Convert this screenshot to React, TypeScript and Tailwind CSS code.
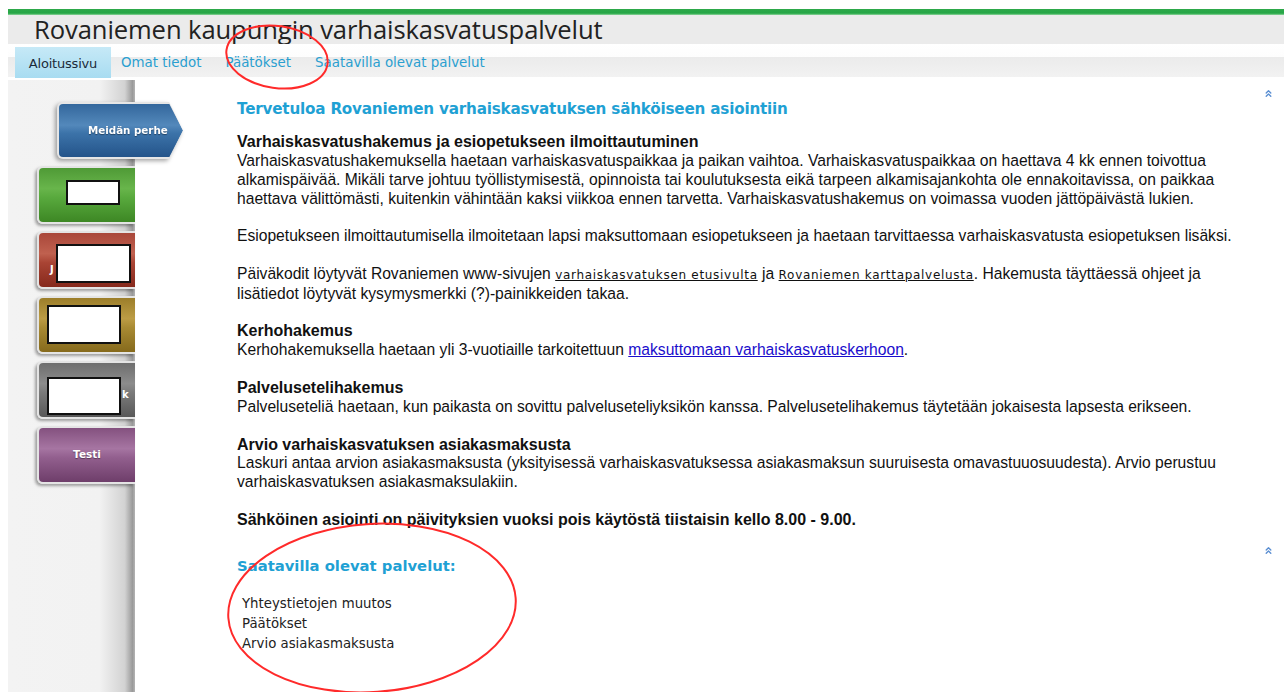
import { ChevronsUp } from "lucide-react";

const navItems = ["Aloitussivu", "Omat tiedot", "Päätökset", "Saatavilla olevat palvelut"];

// glossy fills for the family menu buttons
const glossGreen =
  "bg-[linear-gradient(to_bottom,#4f9a36_0%,#68b54b_38%,#58a93d_55%,#3d8724_100%)]";
const glossRed =
  "bg-[linear-gradient(to_bottom,#a9473a_0%,#c0614f_38%,#a94434_55%,#86291c_100%)]";
const glossGold =
  "bg-[linear-gradient(to_bottom,#9c7e2a_0%,#bc9c45_38%,#a88a33_55%,#866a1c_100%)]";
const glossGray =
  "bg-[linear-gradient(to_bottom,#6e6e6e_0%,#8c8c8c_38%,#7a7a7a_55%,#585858_100%)]";
const glossPurple =
  "bg-[linear-gradient(to_bottom,#84517f_0%,#a675a2_38%,#925f8e_55%,#6e3e6a_100%)]";

function SideButton({ gloss, children, className = "" }: { gloss: string; children?: React.ReactNode; className?: string }) {
  return (
    <div className="rounded-l-[6px] border-2 border-r-0 border-[#e4e4e4] shadow-[-2px_2px_3px_rgba(0,0,0,0.35)] ml-[29px] h-[58px]">
      <div className={`h-full rounded-l-[4px] ${gloss} ${className}`}>{children}</div>
    </div>
  );
}

function Hidden({ className }: { className: string }) {
  return <div className={`bg-white border-2 border-[#111] shrink-0 ${className}`} />;
}

export default function App() {
  return (
    <div className="relative w-[1284px] h-[692px] overflow-hidden bg-white pl-2 pt-[9px] flex flex-col">
      {/* top stripe */}
      <div className="h-[6px] bg-[linear-gradient(to_bottom,#2ea84a_0%,#25a646_70%,#8fd49c_100%)]" />

      {/* title bar */}
      <div className="h-[29px] bg-[#ebebeb] pl-[26px] flex items-center">
        <h1 className="font-['Open_Sans',sans-serif] text-[25.6px] leading-none text-[#222] tracking-[-0.1px]">
          Rovaniemen kaupungin varhaiskasvatuspalvelut
        </h1>
      </div>

      {/* navigation */}
      <div className="h-[33px] bg-[linear-gradient(to_bottom,#ffffff_0px,#fdfdfd_13px,#ebebeb_13px,#f2f2f2_33px)] flex items-end pl-[7px] font-['DejaVu_Sans',Verdana,sans-serif] text-[13.4px]">
        {navItems.map((item, i) =>
          i === 0 ? (
            <div
              key={item}
              className="h-[31px] w-[96px] mb-[-1px] pt-[3px] flex items-center justify-center bg-[linear-gradient(to_bottom,#c6e9f7_0%,#a8dcf1_100%)] text-[#1b2b3a] text-[13px] tracking-[-0.2px]"
            >
              {item}
            </div>
          ) : (
            <div key={item} className="h-[31px] pt-[4px] flex items-center ml-[10px] mr-[14px] text-[#2a9fd0]">
              {item}
            </div>
          )
        )}
      </div>

      <div className="h-[3px]" />

      {/* page body */}
      <div className="flex flex-1 min-h-0">
        {/* family menu */}
        <div className="w-[127px] shrink-0 bg-[linear-gradient(to_right,#f3f3f3_0%,#f2f2f2_72%,#d2d2d2_92%,#9a9a9a_98%,#b4b4b4_100%)] flex flex-col pt-[22px] gap-[7px]">
          <div className="ml-[49px] w-[126px] h-[57px] relative z-10 drop-shadow-[-2px_2px_2px_rgba(0,0,0,0.35)]">
            <div className="h-full bg-[#e6e6e6] rounded-l-[6px] [clip-path:polygon(0_0,89%_0,100%_50%,89%_100%,0_100%)] p-[2px] pr-0">
              <div className="h-full rounded-l-[4px] bg-[linear-gradient(to_bottom,#33679c_0%,#5388bb_40%,#3c73a9_55%,#24548a_100%)] [clip-path:polygon(0_0,89%_0,100%_50%,89%_100%,0_100%)] flex items-center pl-[29px] font-['DejaVu_Sans',Verdana,sans-serif] font-bold text-[10.3px] text-white [text-shadow:0_1px_1px_rgba(0,0,0,0.4)]">
                Meidän perhe
              </div>
            </div>
          </div>

          <SideButton gloss={glossGreen} className="flex items-start pl-[27px] pt-[12px]">
            <Hidden className="w-[54px] h-[25px]" />
          </SideButton>

          <SideButton gloss={glossRed} className="flex items-start pl-[11px] pt-[11px] gap-[2px] font-['DejaVu_Sans',Verdana,sans-serif] font-bold text-[10px] text-white">
            <span className="mt-[18px]">J</span>
            <Hidden className="w-[75px] h-[39px]" />
          </SideButton>

          <SideButton gloss={glossGold} className="flex items-start pl-[8px] pt-[7px]">
            <Hidden className="w-[74px] h-[39px]" />
          </SideButton>

          <SideButton gloss={glossGray} className="flex items-start pl-[8px] pt-[14px] gap-[1px] font-['DejaVu_Sans',Verdana,sans-serif] font-bold text-[10px] text-white">
            <Hidden className="w-[74px] h-[38px]" />
            <span className="mt-[10px]">k</span>
          </SideButton>

          <SideButton
            gloss={glossPurple}
            className="flex items-center justify-center font-['DejaVu_Sans',Verdana,sans-serif] font-bold text-[10.5px] text-white [text-shadow:0_1px_1px_rgba(0,0,0,0.4)]"
          >
            Testi
          </SideButton>
        </div>

        {/* main content */}
        <div className="flex-1 pl-[102px] pr-[10px] pt-[8px] font-['Liberation_Sans',Arial,sans-serif] text-[15.65px] leading-[18.85px] text-[#111]">
          <div className="flex justify-between items-start">
            <h2 className="mt-[12px] font-['DejaVu_Sans',Verdana,sans-serif] font-bold text-[15.2px] leading-[19px] text-[#1fa1d4] tracking-[-0.2px]">
              Tervetuloa Rovaniemen varhaiskasvatuksen sähköiseen asiointiin
            </h2>
            <ChevronsUp size={11} strokeWidth={3} className="text-[#5b8fd2] mt-[0px]" />
          </div>

          <div className="mt-[14px] whitespace-nowrap">
            <p className="font-bold text-[16px]">Varhaiskasvatushakemus ja esiopetukseen ilmoittautuminen</p>
            <p>
              Varhaiskasvatushakemuksella haetaan varhaiskasvatuspaikkaa ja paikan vaihtoa. Varhaiskasvatuspaikkaa on haettava 4 kk ennen toivottua
              <br />
              alkamispäivää. Mikäli tarve johtuu työllistymisestä, opinnoista tai koulutuksesta eikä tarpeen alkamisajankohta ole ennakoitavissa, on paikkaa
              <br />
              haettava välittömästi, kuitenkin vähintään kaksi viikkoa ennen tarvetta. Varhaiskasvatushakemus on voimassa vuoden jättöpäivästä lukien.
            </p>
            <p className="mt-[18.85px]">
              Esiopetukseen ilmoittautumisella ilmoitetaan lapsi maksuttomaan esiopetukseen ja haetaan tarvittaessa varhaiskasvatusta esiopetuksen lisäksi.
            </p>
            <p className="mt-[18.85px]">
              Päiväkodit löytyvät Rovaniemen www-sivujen{" "}
              <a className="underline font-['DejaVu_Sans',Verdana,sans-serif] text-[12px] tracking-[0.7px] text-[#111]">varhaiskasvatuksen etusivulta</a> ja{" "}
              <a className="underline font-['DejaVu_Sans',Verdana,sans-serif] text-[12px] tracking-[0.7px] text-[#111]">Rovaniemen karttapalvelusta</a>. Hakemusta täyttäessä ohjeet ja
              <br />
              lisätiedot löytyvät kysymysmerkki (?)-painikkeiden takaa.
            </p>

            <p className="mt-[18.85px] font-bold text-[16px]">Kerhohakemus</p>
            <p>
              Kerhohakemuksella haetaan yli 3-vuotiaille tarkoitettuun{" "}
              <a className="underline text-[#1a0dcc]">maksuttomaan varhaiskasvatuskerhoon</a>.
            </p>

            <p className="mt-[18.85px] font-bold text-[16px]">Palvelusetelihakemus</p>
            <p>
              Palveluseteliä haetaan, kun paikasta on sovittu palveluseteliyksikön kanssa. Palvelusetelihakemus täytetään jokaisesta lapsesta erikseen.
            </p>

            <p className="mt-[18.85px] font-bold text-[16px]">Arvio varhaiskasvatuksen asiakasmaksusta</p>
            <p>
              Laskuri antaa arvion asiakasmaksusta (yksityisessä varhaiskasvatuksessa asiakasmaksun suuruisesta omavastuuosuudesta). Arvio perustuu
              <br />
              varhaiskasvatuksen asiakasmaksulakiin.
            </p>

            <p className="mt-[18.85px] font-bold text-[16px]">Sähköinen asiointi on päivityksien vuoksi pois käytöstä tiistaisin kello 8.00 - 9.00.</p>
          </div>

          <div className="flex justify-end mt-[15px]">
            <ChevronsUp size={11} strokeWidth={3} className="text-[#5b8fd2]" />
          </div>
          <h2 className="mt-[1px] font-['DejaVu_Sans',Verdana,sans-serif] font-bold text-[14.8px] text-[#1fa1d4]">
            Saatavilla olevat palvelut:
          </h2>
          <ul className="mt-[18px] ml-[5px] font-['DejaVu_Sans',Verdana,sans-serif] text-[13.3px] leading-[20px] text-[#222]">
            <li>Yhteystietojen muutos</li>
            <li>Päätökset</li>
            <li>Arvio asiakasmaksusta</li>
          </ul>
        </div>
      </div>

      {/* red pen marks */}
      <svg className="absolute inset-0 pointer-events-none" width="1284" height="692">
        <ellipse cx="277" cy="57" rx="51" ry="31" transform="rotate(8 277 57)" fill="none" stroke="#ff2a2a" strokeWidth="2" />
        <ellipse cx="372" cy="608" rx="144" ry="84" transform="rotate(-4 372 608)" fill="none" stroke="#ff2a2a" strokeWidth="2" />
      </svg>
    </div>
  );
}
